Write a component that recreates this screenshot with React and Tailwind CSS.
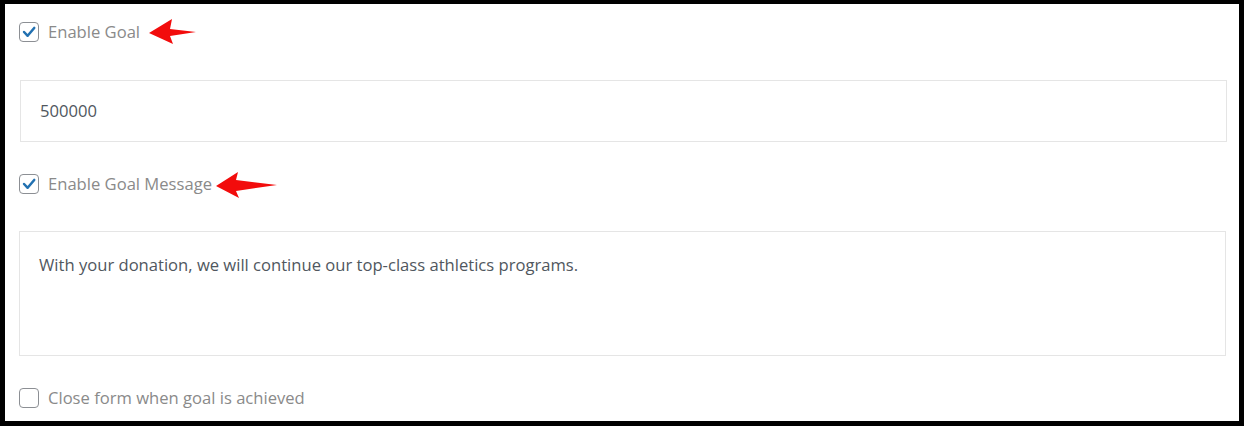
import React from 'react';

const font = { fontFamily: '"Open Sans", "Noto Sans", sans-serif' };

// Red pointer arrows used as annotations beside labels
const ArrowShort = () => (
  <svg viewBox="0 0 48 26" className="ml-[9px] h-[26px] w-[48px]" aria-hidden="true">
    <polygon points="0,14 23,0 21,10 47,13 21,17 24,25" fill="#f20c0c" />
  </svg>
);

const ArrowLong = () => (
  <svg viewBox="0 0 62 27" className="ml-[4px] mt-[3px] h-[27px] w-[62px]" aria-hidden="true">
    <polygon points="0,14 22,0 20,8 61,13 20,19 23,26" fill="#f20c0c" />
  </svg>
);

const Checkbox = ({ checked }) => (
  <span className="flex h-[20px] w-[20px] shrink-0 items-center justify-center rounded-[4px] border border-[#8c8f94] bg-white">
    {checked && (
      <svg viewBox="0 0 20 20" className="h-[18px] w-[18px]">
        <path d="M4.5 10l4 4.2L15.8 5.5" fill="none" stroke="#2271b1" strokeWidth="2.8" strokeLinecap="round" strokeLinejoin="round" />
      </svg>
    )}
  </span>
);

const CheckRow = ({ checked, label, arrow, className = '' }) => (
  <div className={`flex h-[20px] items-center ${className}`}>
    <Checkbox checked={checked} />
    <span className="ml-[9px] text-[16.6px] leading-none text-[#8a8a8a]">{label}</span>
    {arrow}
  </div>
);

export default function App() {
  return (
    <div className="h-[426px] w-full border-[5px] border-t-[4px] border-black bg-white" style={font}>
      <div className="flex flex-col pl-[14px] pr-[12px]">
        <CheckRow checked label="Enable Goal" className="mt-[18px]" arrow={<ArrowShort />} />
        <div className="ml-[1px] mt-[38px] flex h-[62px] items-center border border-[#e5e5e5] px-[19px] text-[16.6px] text-[#50575e]">
          500000
        </div>
        <CheckRow checked label="Enable Goal Message" className="mt-[32px]" arrow={<ArrowLong />} />
        <div className="mr-[1px] mt-[37px] h-[125px] border border-[#e5e5e5] px-[19px] pt-[21px] text-[16.6px] text-[#50575e]">
          With your donation, we will continue our top-class athletics programs.
        </div>
        <CheckRow label="Close form when goal is achieved" className="mt-[32px]" />
      </div>
    </div>
  );
}
